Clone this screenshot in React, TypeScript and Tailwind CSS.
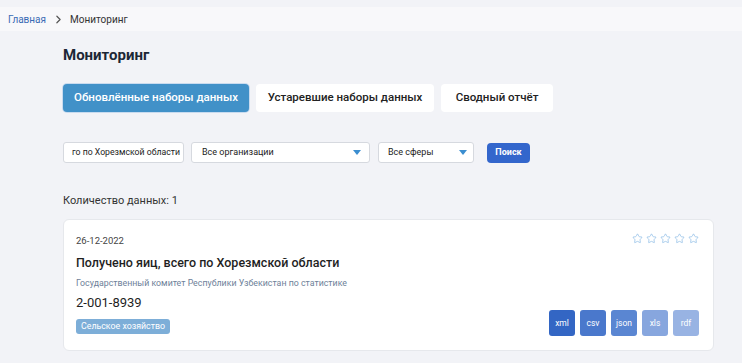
import { ChevronRight, Star } from "lucide-react";

const FORMATS = [
  { label: "xml", cls: "bg-[#3366c4]" },
  { label: "csv", cls: "bg-[#4a78cc]" },
  { label: "json", cls: "bg-[#5a86d2]" },
  { label: "xls", cls: "bg-[#87a6de]" },
  { label: "rdf", cls: "bg-[#98b3e3]" },
];

function Caret() {
  return (
    <svg width="8" height="5" viewBox="0 0 8 5" className="shrink-0">
      <path d="M0 0h8L4 5z" fill="#3b8ed0" />
    </svg>
  );
}

export default function App() {
  return (
    <div className="min-h-[363px] w-[742px] bg-[#f2f3f7] pt-[7px] font-['Roboto','Noto_Sans',sans-serif] text-[#222]">
      {/* breadcrumb */}
      <div className="flex h-[24px] items-center bg-[#f8f8fa] pl-[8px] text-[10px]">
        <span className="text-[#3a6bb5]">Главная</span>
        <ChevronRight size={13} strokeWidth={2.2} className="ml-[6px] text-[#555]" />
        <span className="ml-[5px] text-[#333]">Мониторинг</span>
      </div>

      <div className="pl-[63px] pr-[28px]">
        <h1 className="mt-[14px] text-[15px] font-bold leading-[20px] text-[#1c2735]">Мониторинг</h1>

        {/* tabs */}
        <div className="mt-[19px] flex gap-[7px] text-[11.5px] font-medium">
          <button className="h-[28px] w-[186px] rounded-[4px] bg-[#4191c8] text-white shadow-[0_0_0_1px_#c9dbef]">
            Обновлённые наборы данных
          </button>
          <button className="h-[28px] w-[178px] rounded-[4px] bg-white text-[#222]">Устаревшие наборы данных</button>
          <button className="h-[28px] w-[112px] rounded-[4px] bg-white text-[#222]">Сводный отчёт</button>
        </div>

        {/* filters */}
        <div className="mt-[30px] flex items-center text-[9px] text-[#222]">
          <div className="flex h-[21px] w-[121px] items-center overflow-hidden whitespace-nowrap rounded-[3px] border border-[#d6d9df] bg-white pl-[8px] text-[8.7px]">
            го по Хорезмской области
          </div>
          <div className="ml-[7px] flex h-[21px] w-[179px] items-center justify-between rounded-[3px] border border-[#d6d9df] bg-white pl-[10px] pr-[8px]">
            <span>Все организации</span>
            <Caret />
          </div>
          <div className="ml-[8px] flex h-[21px] w-[96px] items-center justify-between rounded-[3px] border border-[#d6d9df] bg-white pl-[9px] pr-[6px]">
            <span>Все сферы</span>
            <Caret />
          </div>
          <button className="ml-[13px] h-[20px] w-[43px] rounded-[4px] bg-[#3366cc] text-[9px] font-bold text-white">Поиск</button>
        </div>

        <div className="mt-[30px] text-[11px] leading-[16px] text-[#333]">Количество данных: 1</div>

        {/* card */}
        <div className="mt-[10px] w-[651px] rounded-[6px] border border-[#e6e8ec] bg-white pb-[14px] pl-[12px] pr-[14px] pt-[11px]">
          <div className="flex items-start justify-between">
            <span className="mt-[3px] text-[9.5px] text-[#444]">26-12-2022</span>
            <div className="flex gap-[3px] pt-[2px]">
              {[0, 1, 2, 3, 4].map((i) => (
                <Star key={i} size={11} strokeWidth={1.6} className="text-[#8ebde6]" />
              ))}
            </div>
          </div>
          <div className="mt-[6px] text-[12.5px] font-medium leading-[18px] text-[#1f1f1f]">
            Получено яиц, всего по Хорезмской области
          </div>
          <div className="mt-[4px] text-[8.8px] leading-[14px] text-[#6e7f99]">
            Государственный комитет Республики Узбекистан по статистике
          </div>
          <div className="flex items-end justify-between">
            <div>
              <div className="mt-[4px] text-[13px] leading-[18px] text-[#1f1f1f]">2-001-8939</div>
              <span className="mt-[5px] inline-flex h-[15px] items-center rounded-[3px] bg-[#7daed8] px-[5px] text-[8.8px] text-white">
                Сельское хозяйство
              </span>
            </div>
            <div className="flex gap-[5px]">
              {FORMATS.map((f) => (
                <span
                  key={f.label}
                  className={`flex h-[26px] w-[26px] items-center justify-center rounded-[3px] text-[8.5px] text-white ${f.cls}`}
                >
                  {f.label}
                </span>
              ))}
            </div>
          </div>
        </div>
      </div>
    </div>
  );
}
